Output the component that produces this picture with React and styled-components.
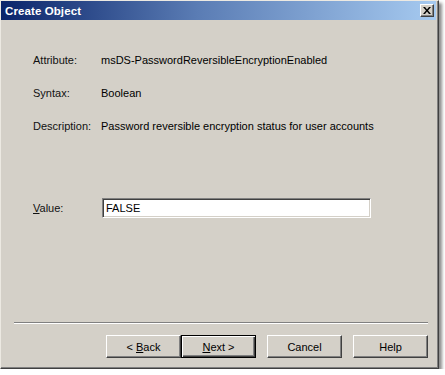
import React from "react";
import styled, { createGlobalStyle } from "styled-components";

const GlobalStyle = createGlobalStyle`
    html, body {
        margin: 0;
        padding: 0;
        background: #ffffff;
    }
    body {
        font-family: Tahoma, "Liberation Sans", Arial, sans-serif;
        font-size: 11px;
        color: #000;
    }
`;

const Window = styled.div`
    box-sizing: border-box;
    width: 439px;
    height: 369px;
    display: flex;
    flex-direction: column;
    background: #d4d0c8;
    border: 1px solid;
    border-color: #ece9e2 #404040 #404040 #ece9e2;
    box-shadow: inset -1px -1px 0 #808080, 3px 3px 3px rgba(0, 0, 0, 0.45);
`;

const TitleBar = styled.div`
    height: 19px;
    margin-right: 2px;
    display: flex;
    align-items: center;
    justify-content: space-between;
    padding: 0 2px 0 4px;
    background: linear-gradient(to right, #0a246a, #5a7cb4 45%, #a6caf0);
`;

const Title = styled.span`
    color: #fff;
    font-weight: bold;
    font-size: 11.5px;
    letter-spacing: 0.1px;
`;

const CloseButton = styled.div`
    box-sizing: border-box;
    width: 14px;
    height: 13px;
    display: flex;
    align-items: center;
    justify-content: center;
    background: #d4d0c8;
    border: 1px solid;
    border-color: #fff #404040 #404040 #fff;
    box-shadow: inset -1px -1px 0 #808080;
`;

const Body = styled.div`
    flex: 1;
    padding: 34px 0 0 32px;
`;

const Fields = styled.div`
    display: grid;
    grid-template-columns: 68px 1fr;
    row-gap: 20px;
    line-height: 13px;
`;

const Label = styled.span`
    color: #111;
`;

const ValueRow = styled.div`
    display: grid;
    grid-template-columns: 69px 269px;
    align-items: center;
    margin-top: 65px;
`;

const Underline = styled.span`
    text-decoration: underline;
`;

const TextBox = styled.div`
    box-sizing: border-box;
    height: 20px;
    padding: 2px 0 0 3px;
    background: #fff;
    border: 1px solid;
    border-color: #808080 #fff #fff #808080;
    box-shadow: inset 1px 1px 0 #404040, inset -1px -1px 0 #d4d0c8;
    line-height: 14px;
`;

const Footer = styled.div`
    display: flex;
    flex-direction: column;
    padding: 0 10px 10px 13px;
`;

const Separator = styled.div`
    height: 0;
    border-top: 1px solid #808080;
    border-bottom: 1px solid #fff;
`;

const Buttons = styled.div`
    display: flex;
    justify-content: flex-end;
    margin-top: 11px;
`;

const Button = styled.div`
    box-sizing: border-box;
    width: 75px;
    height: 23px;
    margin-left: ${(p) => p.gap || 0}px;
    display: flex;
    align-items: center;
    justify-content: center;
    background: #d4d0c8;
    border: 1px solid;
    border-color: ${(p) => (p.primary ? "#000" : "#fff #404040 #404040 #fff")};
    box-shadow: ${(p) =>
        p.primary
            ? "inset 1px 1px 0 #fff, inset -1px -1px 0 #404040, inset -2px -2px 0 #808080"
            : "inset -1px -1px 0 #808080"};
`;

export default function App() {
    return (
        <>
            <GlobalStyle />
            <Window>
                <TitleBar>
                    <Title>Create Object</Title>
                    <CloseButton>
                        <svg width="8" height="7" viewBox="0 0 8 7">
                            <path d="M0 0h2l2 2.5L6 0h2L5 3.5 8 7H6L4 4.5 2 7H0l3-3.5z" fill="#000" />
                        </svg>
                    </CloseButton>
                </TitleBar>
                <Body>
                    <Fields>
                        <Label>Attribute:</Label>
                        <span>msDS-PasswordReversibleEncryptionEnabled</span>
                        <Label>Syntax:</Label>
                        <span>Boolean</span>
                        <Label>Description:</Label>
                        <span>Password reversible encryption status for user accounts</span>
                    </Fields>
                    <ValueRow>
                        <Label>
                            <Underline>V</Underline>alue:
                        </Label>
                        <TextBox>FALSE</TextBox>
                    </ValueRow>
                </Body>
                <Footer>
                    <Separator />
                    <Buttons>
                        <Button>
                            &lt;&nbsp;<Underline>B</Underline>ack
                        </Button>
                        <Button primary>
                            <Underline>N</Underline>ext &gt;
                        </Button>
                        <Button gap={11}>Cancel</Button>
                        <Button gap={11}>Help</Button>
                    </Buttons>
                </Footer>
            </Window>
        </>
    );
}
